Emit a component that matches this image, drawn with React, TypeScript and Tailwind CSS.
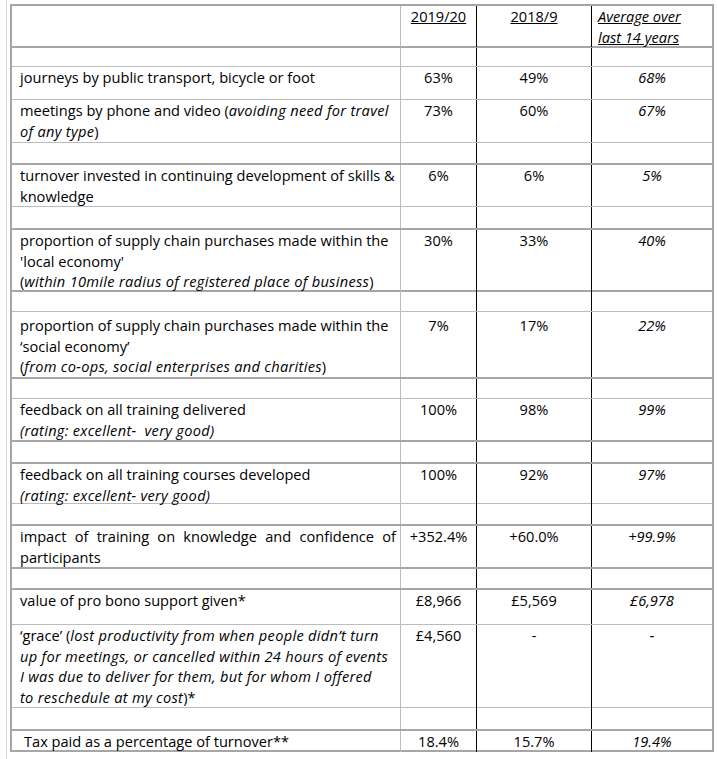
import type { ReactNode } from 'react';

type Row = {
  h: string;
  line: string;
  label?: ReactNode;
  vals?: [string, string, string];
  pad?: string;
};

const THICK = 'border-t-2 border-t-[#a6a6a6]';
const THIN = 'border-t border-t-[#bcbcbc]';

// italic runs in the label column are set a little wider, as in the document
function I({ children }: { children: ReactNode }) {
  return <i className="tracking-[0.3px]">{children}</i>;
}

const rows: Row[] = [
  { h: 'h-[20px]', line: THICK },
  {
    h: 'h-[33px]',
    line: THIN,
    label: 'journeys by public transport, bicycle or foot',
    vals: ['63%', '49%', '68%'],
  },
  {
    h: 'h-[43px]',
    line: THIN,
    label: (
      <>
        meetings by phone and video (<I>avoiding need for travel</I>
        <br />
        <I>of any type</I>)
      </>
    ),
    vals: ['73%', '60%', '67%'],
  },
  { h: 'h-[21px]', line: THIN },
  {
    h: 'h-[43px]',
    line: THICK,
    label: (
      <>
        turnover invested in continuing development of skills &amp;
        <br />
        knowledge
      </>
    ),
    vals: ['6%', '6%', '5%'],
  },
  { h: 'h-[22px]', line: THIN },
  {
    h: 'h-[62px]',
    line: THICK,
    label: (
      <>
        proportion of supply chain purchases made within the
        <br />
        'local economy'
        <br />
        (<I>within 10mile radius of registered place of business</I>)
      </>
    ),
    vals: ['30%', '33%', '40%'],
  },
  { h: 'h-[21px]', line: THICK },
  {
    h: 'h-[66px]',
    line: THIN,
    pad: 'pt-[3px]',
    label: (
      <>
        proportion of supply chain purchases made within the
        <br />
        ‘social economy’
        <br />
        (<I>from co-ops, social enterprises and charities</I>)
      </>
    ),
    vals: ['7%', '17%', '22%'],
  },
  { h: 'h-[21px]', line: THICK },
  {
    h: 'h-[42px]',
    line: THIN,
    label: (
      <>
        feedback on all training delivered
        <br />
        <i className="whitespace-pre tracking-[0.3px]">(rating: excellent-  very good)</i>
      </>
    ),
    vals: ['100%', '98%', '99%'],
  },
  { h: 'h-[22px]', line: THICK },
  {
    h: 'h-[41px]',
    line: THICK,
    label: (
      <>
        feedback on all training courses developed
        <br />
        <I>(rating: excellent- very good)</I>
      </>
    ),
    vals: ['100%', '92%', '97%'],
  },
  { h: 'h-[21px]', line: THIN },
  {
    h: 'h-[43px]',
    line: THICK,
    label: (
      <>
        <span className="block whitespace-normal pr-[4px] [text-align-last:justify]">
          impact of training on knowledge and confidence of
        </span>
        <span className="block">participants</span>
      </>
    ),
    vals: ['+352.4%', '+60.0%', '+99.9%'],
  },
  { h: 'h-[21px]', line: THICK },
  {
    h: 'h-[36px]',
    line: THICK,
    label: 'value of pro bono support given*',
    vals: ['£8,966', '£5,569', '£6,978'],
  },
  {
    h: 'h-[83px]',
    line: THIN,
    label: (
      <>
        ‘grace’ (<I>lost productivity from when people didn’t turn</I>
        <br />
        <I>up for meetings, or cancelled within 24 hours of events</I>
        <br />
        <I>I was due to deliver for them, but for whom I offered</I>
        <br />
        <I>to reschedule at my cost</I>)*
      </>
    ),
    vals: ['£4,560', '-', '-'],
  },
  { h: 'h-[22px]', line: THIN },
  {
    h: 'h-[21px]',
    line: THICK,
    label: <span className="pl-[4px]">Tax paid as a percentage of turnover**</span>,
    vals: ['18.4%', '15.7%', '19.4%'],
  },
];

function TableRow({ row }: { row: Row }) {
  return (
    <div className={`grid grid-cols-[389px_76px_115px_120px] ${row.h} ${row.line}`}>
      <div className={`min-w-0 whitespace-nowrap border-r border-r-[#bcbcbc] pl-[8px] ${row.pad ?? ''}`}>
        {row.label}
      </div>
      <div className={`border-r border-r-black text-center ${row.pad ?? ''}`}>{row.vals?.[0]}</div>
      <div className={`border-r border-r-black text-center ${row.pad ?? ''}`}>{row.vals?.[1]}</div>
      <div className={`text-center italic ${row.pad ?? ''}`}>{row.vals?.[2]}</div>
    </div>
  );
}

export default function App() {
  return (
    <div className="flex h-[759px] bg-white font-['Open_Sans',sans-serif] text-[14.6px] leading-[20.67px] text-black">
      <div className="ml-[6px] w-px bg-[#d6d6d6]" />
      <div className="ml-[3px] mt-[4px] self-start w-[704px] border-l-2 border-r-2 border-b-2 border-[#a6a6a6]">
        {/* header */}
        <div className={`grid grid-cols-[389px_76px_115px_120px] h-[42px] ${THICK}`}>
          <div className="border-r border-r-[#bcbcbc]" />
          <div className="border-r border-r-black text-center">
            <span className="underline">2019/20</span>
          </div>
          <div className="border-r border-r-black text-center">
            <span className="underline">2018/9</span>
          </div>
          <div className="pl-[6px] italic underline">
            Average over
            <br />
            last 14 years
          </div>
        </div>
        {rows.map((row, i) => (
          <TableRow key={i} row={row} />
        ))}
      </div>
    </div>
  );
}
